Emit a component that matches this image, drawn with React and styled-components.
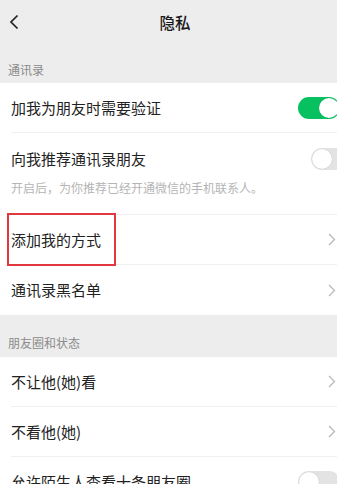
import styled, { createGlobalStyle } from "styled-components";

const GlobalStyle = createGlobalStyle`
	html, body {
		margin: 0;
		padding: 0;
		overflow: hidden;
		background: #ededed;
	}
	body {
		font-family: "Noto Sans CJK SC", "Noto Sans", sans-serif;
	}
`;

const Chevron = () => (
	<ArrowIcon width="8" height="13" viewBox="0 0 8 13">
		<path d="M1 1 L6.5 6.5 L1 12" fill="none" stroke="#b8b8b8" strokeWidth="1.3" />
	</ArrowIcon>
);

const BackIcon = () => (
	<svg width="10" height="16" viewBox="0 0 10 16">
		<path d="M8.5 1.5 L2 8 L8.5 14.5" fill="none" stroke="#222" strokeWidth="1.7" />
	</svg>
);

const App = () => {
	return (
		<Page>
			<GlobalStyle />
			<Header>
				<BackButton>
					<BackIcon />
				</BackButton>
				<Title>隐私</Title>
			</Header>

			<SectionLabel $height={39}>通讯录</SectionLabel>
			<Group>
				<Row>
					<RowText>加我为朋友时需要验证</RowText>
					<Toggle $on />
				</Row>
				<TallRow>
					<RowLine>
						<RowText>向我推荐通讯录朋友</RowText>
						<Toggle />
					</RowLine>
					<Hint>开启后，为你推荐已经开通微信的手机联系人。</Hint>
				</TallRow>
				<Row>
					<RowText>添加我的方式</RowText>
					<Chevron />
					<Highlight />
				</Row>
				<Row $last>
					<RowText>通讯录黑名单</RowText>
					<Chevron />
				</Row>
			</Group>

			<SectionLabel $height={42}>朋友圈和状态</SectionLabel>
			<Group>
				<Row>
					<RowText>不让他(她)看</RowText>
					<Chevron />
				</Row>
				<Row>
					<RowText>不看他(她)</RowText>
					<Chevron />
				</Row>
				<Row $last>
					<RowText>允许陌生人查看十条朋友圈</RowText>
					<Toggle />
				</Row>
			</Group>
		</Page>
	);
};

export default App;

const Page = styled.div`
	width: 350px;
	min-height: 484px;
	background: #ededed;
`;

const Header = styled.div`
	position: relative;
	height: 44px;
	display: flex;
	align-items: center;
	justify-content: center;
`;

const BackButton = styled.div`
	position: absolute;
	left: 9px;
	top: 14px;
	display: flex;
`;

const Title = styled.div`
	font-size: 15.5px;
	font-weight: 500;
	color: #1a1a1a;
`;

const SectionLabel = styled.div`
	height: ${(p) => p.$height}px;
	box-sizing: border-box;
	display: flex;
	align-items: flex-end;
	padding: 0 0 ${(p) => (p.$height > 40 ? 8 : 7)}px 8px;
	font-size: 12px;
	line-height: 12px;
	color: #8a8a8a;
`;

const Group = styled.div`
	background: #fff;
`;

const Row = styled.div`
	position: relative;
	height: 50px;
	box-sizing: border-box;
	display: flex;
	align-items: center;
	justify-content: space-between;
	margin-left: 11px;
	padding-right: 13px;
	border-bottom: ${(p) => (p.$last ? "none" : "1px solid #efefef")};
`;

const TallRow = styled.div`
	box-sizing: border-box;
	height: 82px;
	display: flex;
	flex-direction: column;
	margin-left: 11px;
	padding: 14px 0 0;
	border-bottom: 1px solid #efefef;
`;

const RowLine = styled.div`
	display: flex;
	align-items: center;
	justify-content: space-between;
	height: 24px;
`;

const RowText = styled.div`
	font-size: 15px;
	line-height: 20px;
	color: #222;
`;

const Hint = styled.div`
	margin-top: 9px;
	font-size: 12px;
	line-height: 16px;
	color: #b5b5b5;
`;

const ArrowIcon = styled.svg`
	margin-right: 1px;
`;

const Toggle = styled.div`
	position: relative;
	width: 42px;
	height: 22px;
	box-sizing: border-box;
	border-radius: 11px;
	margin-right: -3px;
	background: ${(p) => (p.$on ? "#07c160" : "#e3e3e3")};

	&::after {
		content: "";
		position: absolute;
		top: 1px;
		left: ${(p) => (p.$on ? "21px" : "1px")};
		width: 20px;
		height: 20px;
		border-radius: 50%;
		background: #fff;
		box-shadow: 0 0 1px rgba(0, 0, 0, 0.25);
	}
`;

const Highlight = styled.div`
	position: absolute;
	left: -4px;
	top: -2px;
	width: 109px;
	height: 53px;
	box-sizing: border-box;
	border: 2px solid #e0383c;
	pointer-events: none;
`;
